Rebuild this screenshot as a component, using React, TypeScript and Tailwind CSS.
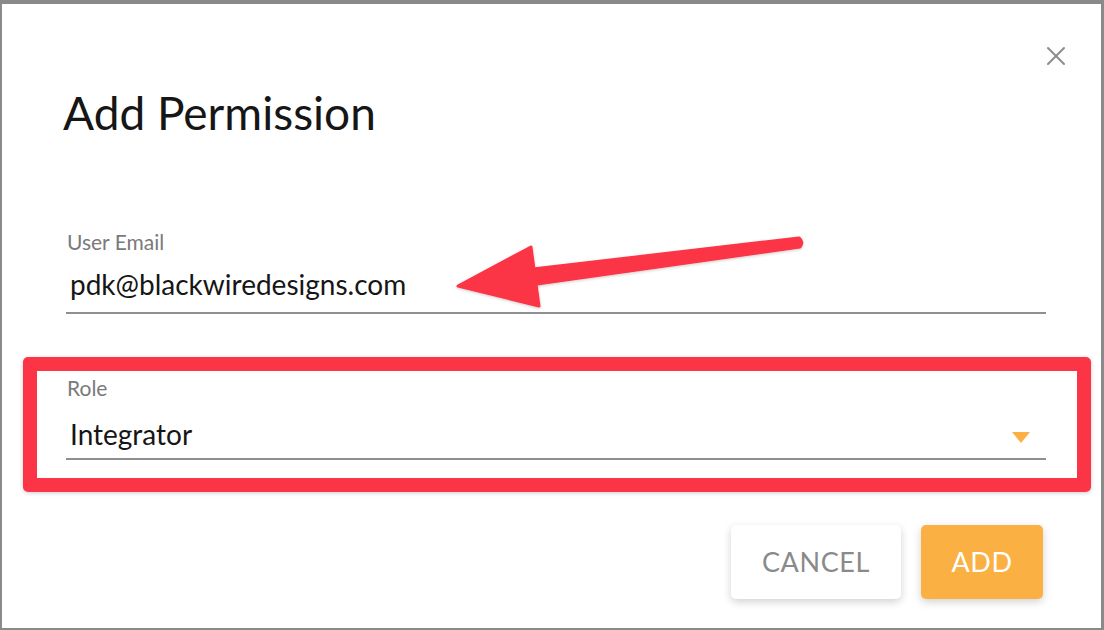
import { X } from "lucide-react";

export default function App() {
  return (
    <div className="relative w-[1104px] h-[630px] overflow-hidden bg-white border-t-4 border-l-2 border-r-[3px] border-b-2 border-[#8a8a8a] font-['Lato','Liberation_Sans',sans-serif] text-[#161616]">
      {/* close */}
      <button className="absolute top-[36px] right-[29px] text-[#8c8c8c]">
        <X size={32} strokeWidth={1.5} />
      </button>

      <div className="pl-[61px] pr-[55px] pt-[79px]">
        <h1 className="text-[46px] leading-[60px] font-normal">Add Permission</h1>

        {/* email */}
        <div className="mt-[87px] pl-[3px]">
          <label className="block text-[21px] leading-[24px] text-[#7a7a7a] pl-[1px]">User Email</label>
          <div className="mt-[12px] pl-[4px] pb-[10px] text-[28px] leading-[36px] border-b-2 border-[#8f8f8f]">
            pdk@blackwiredesigns.com
          </div>
        </div>

        {/* role */}
        <div className="mt-[62px] pl-[3px]">
          <label className="block text-[21px] leading-[24px] text-[#7a7a7a] pl-[1px]">Role</label>
          <div className="mt-[16px] pl-[4px] pr-[16px] pb-[6px] flex items-center justify-between text-[28px] leading-[36px] border-b-2 border-[#8f8f8f]">
            <span>Integrator</span>
            <span className="mt-[7px] w-0 h-0 border-l-[9px] border-r-[9px] border-t-[11px] border-l-transparent border-r-transparent border-t-[#fbb043]" />
          </div>
        </div>

        {/* actions */}
        <div className="mt-[65px] flex justify-end gap-[20px] pr-[3px]">
          <button className="w-[170px] h-[74px] rounded-[5px] bg-white text-[#8a8a8a] text-[27px] tracking-[0.6px] shadow-[0_3px_8px_rgba(0,0,0,0.18)]">
            CANCEL
          </button>
          <button className="w-[122px] h-[74px] rounded-[5px] bg-[#fbb043] text-white text-[27px] tracking-[0.6px] shadow-[0_3px_8px_rgba(0,0,0,0.18)]">
            ADD
          </button>
        </div>
      </div>

      {/* annotation: red highlight box */}
      <div className="absolute left-[21px] top-[353px] w-[1068px] h-[135px] rounded-[5px] border-[14px] border-[#fb3545] shadow-[0_1px_4px_rgba(0,0,0,0.2)] pointer-events-none" />

      {/* annotation: arrow */}
      <svg className="absolute left-0 top-0 pointer-events-none" width="1104" height="630" viewBox="0 0 1104 630">
        <defs>
          <filter id="sh" x="-10%" y="-30%" width="120%" height="160%">
            <feDropShadow dx="0" dy="1" stdDeviation="1.5" floodColor="#000" floodOpacity="0.2" />
          </filter>
        </defs>
        <g filter="url(#sh)" fill="#fb3545" stroke="#fb3545" strokeLinejoin="round" strokeWidth="3">
          <path d="M 531 265 L 797 234 Q 802 238 798 243 L 535 280 Z" />
          <path d="M 456 282 L 529 243 L 537 302 Z" />
        </g>
      </svg>
    </div>
  );
}
